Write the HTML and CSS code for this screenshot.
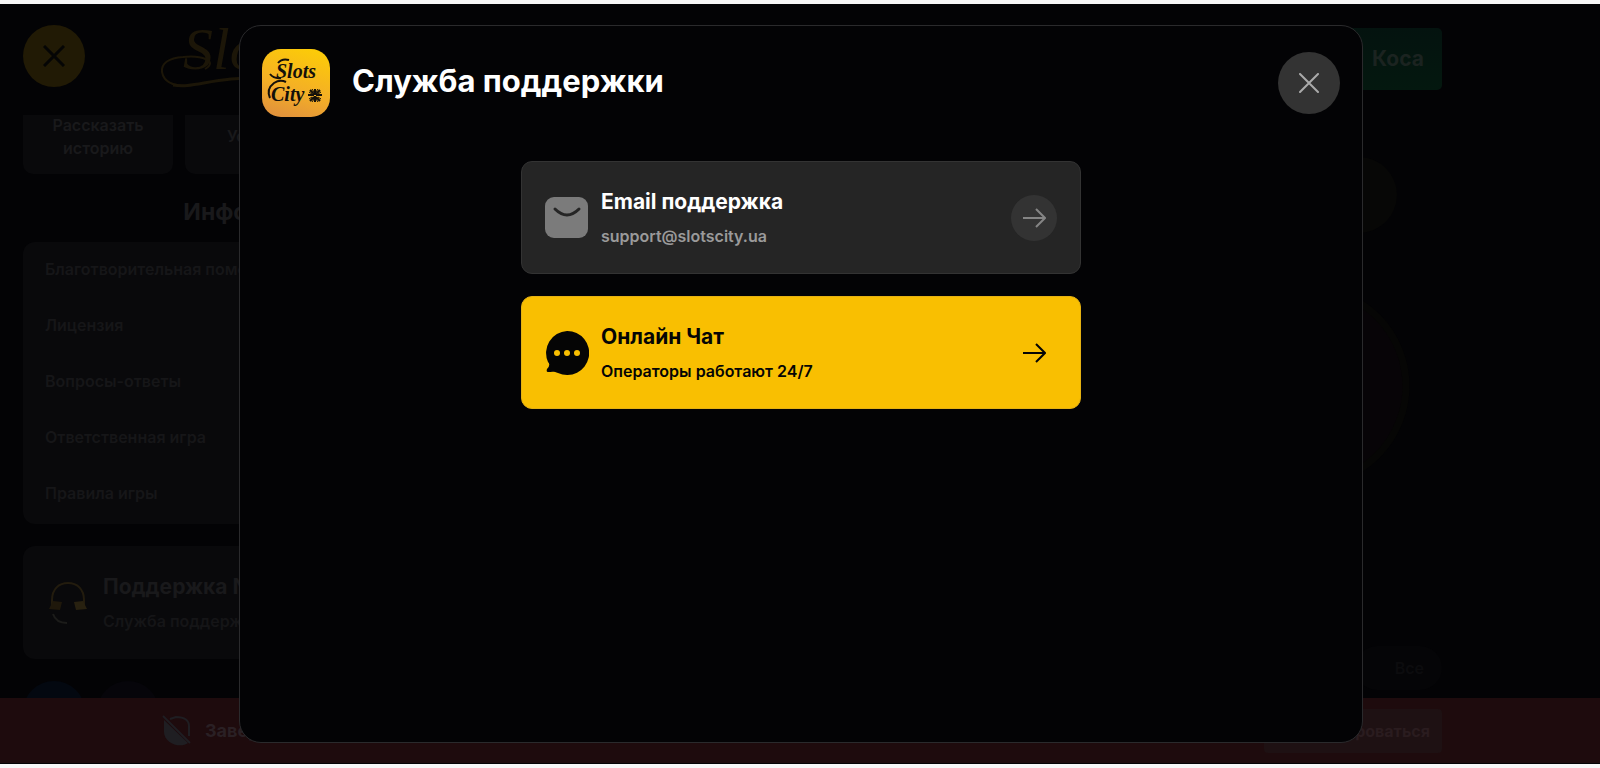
FILE: index.html
```
<!DOCTYPE html>
<html lang="ru">
<head>
    <meta charset="UTF-8">
    <meta name="viewport" content="width=device-width, initial-scale=1.0">
    <title>Slots City - Служба поддержки</title>
    <link rel="stylesheet" href="styles.css">
</head>
<body>
    <div class="page">
        <div class="content">
            <aside class="sidebar">
                <div class="sidebar-header">
                    <button type="button" class="menu-close" aria-label="Закрыть меню">
                        <svg width="22" height="22" viewBox="0 0 22 22"><path d="M1 1L21 21M21 1L1 21"/></svg>
                    </button>
                    <svg class="brand" width="240" height="66" viewBox="0 0 240 66">
                        <path d="M44 46C58 38 40 32 22 34C8 35 0 40 1 49C3 60 14 63 26 63" fill="none" stroke="currentColor" stroke-width="2"/>
                        <path d="M12 62C34 66 52 53 110 55" fill="none" stroke="currentColor" stroke-width="3"/>
                        <text x="22" y="46" class="brand-text">Slots City</text>
                    </svg>
                </div>

                <div class="tiles">
                    <a href="#" class="tile">Рассказать историю</a>
                    <a href="#" class="tile">Условия</a>
                    <a href="#" class="tile">Бонусы</a>
                </div>

                <h2>Информация</h2>
                <nav class="info-list">
                    <a href="#">Благотворительная помощь</a>
                    <a href="#">Лицензия</a>
                    <a href="#">Вопросы-ответы</a>
                    <a href="#">Ответственная игра</a>
                    <a href="#">Правила игры</a>
                </nav>

                <a href="#" class="help-card">
                    <svg width="40" height="44" viewBox="0 0 40 44" fill="none">
                        <path d="M3 26V19C3 8 10 2 19 2S35 8 35 19V26" stroke="#231c0e" stroke-width="2"/>
                        <path d="M0 28L4 20L13 21L11 29Z" fill="#1f180b"/>
                        <path d="M25 21L34 20L38 28L27 29Z" fill="#282110"/>
                        <path d="M4 33C6 39 11 42 18 42" stroke="#1c1c1a" stroke-width="2"/>
                    </svg>
                    <span class="help-text">
                        <strong>Поддержка N1</strong>
                        <span>Служба поддержки</span>
                    </span>
                </a>

                <div class="social">
                    <a href="#" class="social-link telegram" aria-label="Telegram"></a>
                    <a href="#" class="social-link" aria-label="Viber"></a>
                </div>
            </aside>

            <main class="lobby">
                <button type="button" class="cash-btn">Коса</button>
                <svg class="art" width="200" height="400" viewBox="0 0 200 400" fill="none">
                    <circle cx="117" cy="55" r="38" fill="#070706"/>
                    <circle cx="66" cy="246" r="98" fill="#070407" stroke="#060605" stroke-width="7"/>
                </svg>
                <a href="#" class="all-link">Все</a>
            </main>
        </div>

        <footer class="notice">
            <svg width="30" height="32" viewBox="0 0 30 32" fill="none">
                <path d="M2 5L26 28C18 34 2 28 2 17Z" fill="#1f1e22"/>
                <path d="M8 4L14 2C23 2 27 6 27 11V21" stroke="#1f1e22" stroke-width="2"/>
                <path d="M1 1L28 28" stroke="#1f1e22" stroke-width="2"/>
            </svg>
            <p>Завершите верификацию</p>
            <button type="button" class="verify-btn">Верифицироваться</button>
        </footer>

        <div class="overlay">
            <section class="modal" role="dialog" aria-labelledby="modal-title">
                <header class="modal-header">
                    <svg class="logo" width="68" height="68" viewBox="0 0 68 68">
                        <defs>
                            <linearGradient id="gold" x1="0.7" y1="0" x2="0.4" y2="1">
                                <stop offset="0" stop-color="#fccb08"/>
                                <stop offset="0.6" stop-color="#f4af26"/>
                                <stop offset="1" stop-color="#e3943a"/>
                            </linearGradient>
                        </defs>
                        <rect width="68" height="68" rx="19" fill="url(#gold)"/>
                        <g class="logo-text">
                            <text x="14" y="29">Slots</text>
                            <text x="9" y="52">City</text>
                        </g>
                        <path d="M8 25Q12 30 19 29M27 11Q20 9 16 14M8 49Q4 40 12 34Q18 30 24 33" fill="none" stroke="#14100a" stroke-width="2"/>
                        <g stroke="#14100a" stroke-width="1">
                            <path d="M53 40V46M53 47V53M46 46H52M54 46H60M48 41L52 45M58 41L54 45M48 52L52 48M58 52L54 48" stroke-width="2"/>
                            <path d="M50 40L52 43M56 40L54 43M50 53L52 50M56 53L54 50M47 43L50 45M59 43L56 45M47 50L50 48M59 50L56 48"/>
                        </g>
                    </svg>
                    <h1 id="modal-title">Служба поддержки</h1>
                    <button type="button" class="modal-close" aria-label="Закрыть">
                        <svg width="20" height="20" viewBox="0 0 20 20"><path d="M1 1L19 19M19 1L1 19"/></svg>
                    </button>
                </header>

                <div class="options">
                    <a href="#" class="option">
                        <svg class="option-icon" width="44" height="44" viewBox="0 0 44 44">
                            <rect y="1" width="43" height="41" rx="9" fill="#7b7b7b"/>
                            <path d="M10 13Q22 25 34 13" fill="none" stroke="#252525" stroke-width="3" stroke-linecap="round"/>
                        </svg>
                        <span class="option-text">
                            <strong>Email поддержка</strong>
                            <span>support@slotscity.ua</span>
                        </span>
                        <span class="arrow">
                            <svg width="24" height="20" viewBox="0 0 24 20"><path d="M1 10H23M14 1L23 10L14 19"/></svg>
                        </span>
                    </a>

                    <a href="#" class="option option-chat">
                        <svg class="option-icon" width="44" height="44" viewBox="0 0 44 44">
                            <path d="M22 0A22 22 0 1 1 13 42C9 40 6 41 3 41Q1 41 2 38Q6 34 3 31A22 22 0 0 1 22 0Z" fill="#050505"/>
                            <g fill="#f9bf01">
                                <circle cx="12" cy="22" r="3"/>
                                <circle cx="22" cy="22" r="3"/>
                                <circle cx="32" cy="22" r="3"/>
                            </g>
                        </svg>
                        <span class="option-text">
                            <strong>Онлайн Чат</strong>
                            <span>Операторы работают 24/7</span>
                        </span>
                        <span class="arrow">
                            <svg width="24" height="20" viewBox="0 0 24 20"><path d="M1 10H23M14 1L23 10L14 19"/></svg>
                        </span>
                    </a>
                </div>
            </section>
        </div>
    </div>
</body>
</html>
```
FILE: styles.css
```
* {
    margin: 0;
    padding: 0;
    box-sizing: border-box;
}

body {
    font-family: Inter, 'Noto Sans', sans-serif;
    background-color: #f7f7f7;
    color: #19191b;
    height: 100vh;
    padding: 4px 0;
}

a {
    color: inherit;
    text-decoration: none;
}

button {
    border: none;
    font-family: inherit;
    cursor: pointer;
}

svg {
    display: block;
    flex-shrink: 0;
}

.page {
    position: relative;
    height: 100%;
    background-color: #030305;
    display: flex;
    flex-direction: column;
    overflow: hidden;
}

.content {
    flex: 1;
    min-height: 0;
    display: flex;
    justify-content: space-between;
    overflow: hidden;
}

/* left menu */
.sidebar {
    width: 520px;
    padding: 21px 23px 0;
}

.sidebar-header {
    display: flex;
    align-items: center;
    gap: 76px;
    height: 62px;
}

.menu-close,
.modal-close {
    width: 62px;
    height: 62px;
    border-radius: 50%;
    display: flex;
    align-items: center;
    justify-content: center;
    flex-shrink: 0;
}

.menu-close {
    background-color: #211a05;
}

.menu-close svg {
    stroke: #050505;
    stroke-width: 3;
}

.brand {
    color: #1c1608;
    overflow: visible;
}

.brand-text {
    font: italic 60px 'Liberation Serif', serif;
    fill: currentColor;
}

.tiles {
    display: flex;
    gap: 12px;
    margin-top: 28px;
}

.tile {
    flex: 1;
    height: 59px;
    padding: 0 20px 16px;
    display: flex;
    align-items: center;
    justify-content: center;
    text-align: center;
    background-color: #09090b;
    border-radius: 0 0 10px 10px;
    font-size: 16px;
    line-height: 23px;
    font-weight: 600;
}

h2 {
    margin: 22px 0 14px;
    text-align: center;
    font-size: 23px;
    line-height: 32px;
}

.info-list {
    display: flex;
    flex-direction: column;
    gap: 2px;
    background-color: #09090b;
    border-radius: 12px;
    height: 282px;
}

.info-list a {
    padding-left: 22px;
    font-size: 16px;
    line-height: 54px;
    font-weight: 600;
    color: #161618;
    white-space: nowrap;
}

.help-card {
    display: flex;
    align-items: center;
    gap: 14px;
    height: 113px;
    margin-top: 22px;
    padding-left: 26px;
    background-color: #09090b;
    border-radius: 12px;
}

.help-text,
.option-text {
    display: flex;
    flex-direction: column;
    gap: 8px;
}

.help-text strong,
.option-text strong {
    font-size: 21px;
    line-height: 28px;
}

.help-text span,
.option-text span {
    font-size: 16px;
    line-height: 24px;
    font-weight: 600;
}

.help-text span {
    color: #151517;
}

.social {
    display: flex;
    gap: 12px;
    margin-top: 22px;
}

.social-link {
    width: 62px;
    height: 62px;
    border-radius: 50%;
    background-color: #06050a;
}

.telegram {
    background-color: #030810;
}

/* page behind */
.lobby {
    display: flex;
    flex-direction: column;
    align-items: flex-end;
    padding: 24px 158px 0 0;
}

.cash-btn {
    width: 180px;
    height: 62px;
    padding: 0 18px 2px 0;
    border-radius: 5px;
    background: linear-gradient(#04130f, #04180f);
    color: #1b2320;
    font-size: 21px;
    font-weight: 700;
    text-align: right;
}

.art {
    margin-top: 50px;
}

.all-link {
    margin-top: 106px;
    padding: 0 18px 0 40px;
    background-color: #050507;
    border-radius: 22px;
    color: #0c0c0e;
    font-size: 16px;
    line-height: 44px;
    font-weight: 600;
}

.notice {
    flex-shrink: 0;
    height: 66px;
    padding: 0 158px 0 162px;
    display: flex;
    align-items: center;
    gap: 13px;
    background-color: #1e0b0d;
    border-bottom: 1px solid #030305;
    color: #2a2024;
    font-size: 18px;
    font-weight: 700;
}

.verify-btn {
    width: 178px;
    height: 44px;
    margin-left: auto;
    padding-right: 12px;
    border-radius: 4px;
    background-color: #1e1113;
    color: #2a1c1f;
    font-size: 16px;
    font-weight: 700;
    text-align: right;
}

/* support popup */
.overlay {
    position: absolute;
    inset: 0;
    padding: 21px 22px 21px 24px;
    display: flex;
    justify-content: center;
}

.modal {
    width: 100%;
    max-width: 1124px;
    padding: 23px 22px;
    background-color: #030305;
    border: 1px solid #2a2a2c;
    border-radius: 22px;
}

.modal-header {
    display: flex;
    align-items: center;
    gap: 22px;
}

.logo-text {
    font: italic bold 20px 'Liberation Serif', serif;
    fill: #14100a;
}

h1 {
    flex: 1;
    color: #fff;
    font-size: 31px;
    line-height: 40px;
    padding-bottom: 4px;
}

.modal-close {
    background-color: #333;
}

.modal-close svg {
    stroke: #aaa;
    stroke-width: 2;
    stroke-linecap: round;
}

.options {
    max-width: 560px;
    margin: 44px auto 0;
    display: flex;
    flex-direction: column;
    gap: 22px;
}

.option {
    display: flex;
    align-items: center;
    gap: 12px;
    height: 113px;
    padding: 0 23px;
    background-color: #252525;
    border: 1px solid #333;
    border-radius: 11px;
}

.option-text {
    flex: 1;
}

.option-text strong {
    color: #fff;
}

.option-text span {
    color: #9a9a9a;
}

.arrow {
    width: 46px;
    height: 46px;
    border-radius: 50%;
    display: flex;
    align-items: center;
    justify-content: center;
    background-color: #333;
}

.arrow svg {
    fill: none;
    stroke: #858585;
    stroke-width: 2;
}

.option-chat {
    background-color: #f9bf01;
    border-color: #e5b112;
}

.option-chat strong,
.option-chat .option-text span {
    color: #050505;
}

.option-chat .arrow {
    background: none;
}

.option-chat .arrow svg {
    stroke: #050505;
}
```
